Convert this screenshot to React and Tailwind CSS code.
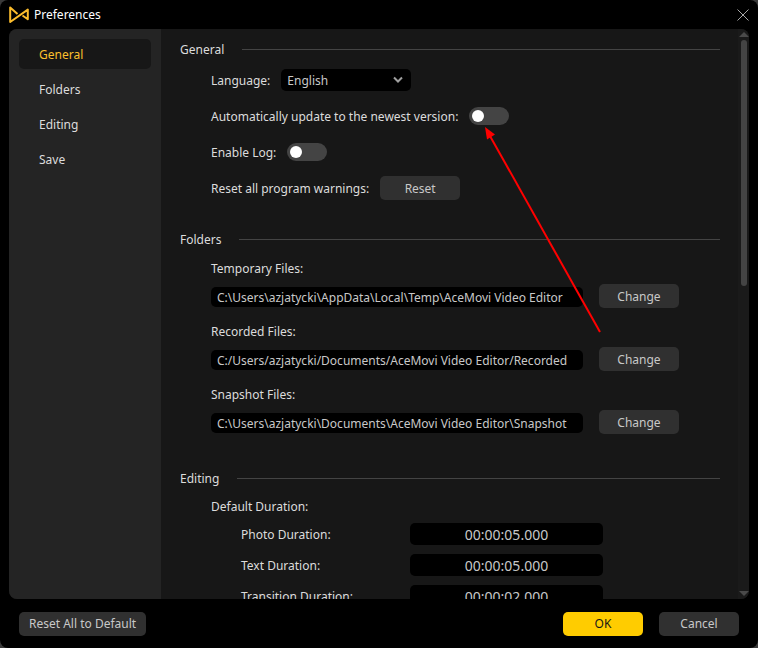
import React, { useState } from 'react';

const sections = ['General', 'Folders', 'Editing', 'Save'];

const folders = [
  { id: 'temporary', label: 'Temporary Files:', path: 'C:\\Users\\azjatycki\\AppData\\Local\\Temp\\AceMovi Video Editor' },
  { id: 'recorded', label: 'Recorded Files:', path: 'C:/Users/azjatycki/Documents/AceMovi Video Editor/Recorded' },
  { id: 'snapshot', label: 'Snapshot Files:', path: 'C:\\Users\\azjatycki\\Documents\\AceMovi Video Editor\\Snapshot' },
];

const durations = [
  { id: 'photo', label: 'Photo Duration:', value: '00:00:05.000' },
  { id: 'text', label: 'Text Duration:', value: '00:00:05.000' },
  { id: 'transition', label: 'Transition Duration:', value: '00:00:02.000' },
];

const Button = ({ children, className = 'w-20 bg-[#303030] text-[#c8c8c8]', ...props }) => (
  <button type="button" className={`h-6 shrink-0 rounded-[5px] ${className}`} {...props}>
    {children}
  </button>
);

const Switch = ({ id }) => {
  const [on, setOn] = useState(false);

  return (
    <input
      id={id}
      type="checkbox"
      role="switch"
      checked={on}
      onChange={() => setOn(!on)}
      className="h-[18px] w-10 shrink-0 appearance-none rounded-full bg-[#444444] px-[3px] py-[3px] before:block before:size-3 before:rounded-full before:bg-white checked:bg-[#ffcc00] checked:before:ml-auto"
    />
  );
};

const SectionTitle = ({ children }) => (
  <div className="mr-[18px] flex h-5 items-center gap-[18px]">
    <h2>{children}</h2>
    <div className="h-px flex-1 bg-[#444444]"></div>
  </div>
);

const App = () => {
  const [active, setActive] = useState('General');

  return (
    <div className="h-screen bg-[#3a3a3a] font-['Noto_Sans',sans-serif] text-[12px] leading-[21px] text-[#dcdcdc]">
      <div className="flex h-full flex-col overflow-hidden rounded-lg bg-black">
        {/* Title bar */}
        <header className="flex h-[29px] shrink-0 items-center justify-between px-[9px]">
          <div className="flex items-center gap-[5px]">
            <svg viewBox="0 0 20 18" className="h-[18px] w-5" fill="none" stroke="#fbbc2c" strokeWidth="2" strokeLinejoin="round">
              <path d="M8.5 8 L1.2 1.5 V16 L18.8 3.6 V13.2 L13.5 9.5" />
            </svg>
            <h1 className="leading-5 text-white">Preferences</h1>
          </div>
          <button type="button" aria-label="Close">
            <svg viewBox="0 0 12 12" className="size-3" stroke="#a8a8a8" strokeWidth="1">
              <path d="M0.5 0.5 L11.5 11.5 M11.5 0.5 L0.5 11.5" />
            </svg>
          </button>
        </header>

        <main className="mx-[9px] flex min-h-0 flex-1 overflow-hidden rounded-lg bg-[#171717]">
          {/* Sidebar */}
          <nav className="flex w-[152px] shrink-0 flex-col gap-[5px] bg-[#242424] p-[10px]">
            {sections.map((name) => (
              <button
                key={name}
                type="button"
                onClick={() => setActive(name)}
                className={`h-[30px] rounded-[5px] px-5 text-left ${name === active ? 'bg-[#171717] text-[#fbc02d]' : ''}`}
              >
                {name}
              </button>
            ))}
          </nav>

          {/* Settings */}
          <div className="min-w-0 flex-1 overflow-y-auto [scrollbar-width:none]">
            <div className="relative pt-[10px] pl-[19px]">
              <section>
                <SectionTitle>General</SectionTitle>
                <div className="mt-[9px] flex flex-col gap-3 pl-[31px]">
                  <div className="flex h-6 items-center gap-[11px]">
                    <label htmlFor="language">Language:</label>
                    <div className="relative">
                      <select id="language" className="block h-[22px] w-[130px] appearance-none rounded-[5px] bg-black px-[6px] text-[#c8c8c8]">
                        <option>English</option>
                      </select>
                      <svg viewBox="0 0 10 8" className="pointer-events-none absolute top-[7px] right-2 h-2 w-[10px]" fill="none" stroke="#a0a0a0" strokeWidth="2">
                        <path d="M1 1.5 L5 5.5 L9 1.5" />
                      </svg>
                    </div>
                  </div>
                  <div className="flex h-6 items-center gap-[11px]">
                    <label htmlFor="auto-update">Automatically update to the newest version:</label>
                    <Switch id="auto-update" />
                  </div>
                  <div className="flex h-6 items-center gap-[11px]">
                    <label htmlFor="enable-log">Enable Log:</label>
                    <Switch id="enable-log" />
                  </div>
                  <div className="flex h-6 items-center gap-[11px]">
                    <span>Reset all program warnings:</span>
                    <Button>Reset</Button>
                  </div>
                </div>
              </section>

              <section className="mt-[29px]">
                <SectionTitle>Folders</SectionTitle>
                <div className="mt-[9px] flex flex-col gap-[13px] pl-[31px]">
                  {folders.map(({ id, label, path }) => (
                    <div key={id} className="flex flex-col gap-[5px]">
                      <label htmlFor={id}>{label}</label>
                      <div className="flex items-end gap-4">
                        <input
                          id={id}
                          type="text"
                          defaultValue={path}
                          className="mb-px h-5 w-[372px] rounded-[5px] bg-black px-[6px] pt-px text-[#c8c8c8]"
                        />
                        <Button>Change</Button>
                      </div>
                    </div>
                  ))}
                </div>
              </section>

              <section className="mt-[34px]">
                <SectionTitle>Editing</SectionTitle>
                <div className="mt-2 pl-[31px]">
                  <h3>Default Duration:</h3>
                  <div className="mt-[6px] flex flex-col gap-[9px] pl-[30px]">
                    {durations.map(({ id, label, value }) => (
                      <div key={id} className="flex h-[22px] items-center">
                        <label htmlFor={id} className="w-[169px]">{label}</label>
                        <input
                          id={id}
                          type="text"
                          defaultValue={value}
                          className="h-[22px] w-[193px] rounded-[5px] bg-black text-center text-[14px] text-[#c8c8c8]"
                        />
                      </div>
                    ))}
                  </div>
                </div>
              </section>

              {/* Pointer to the auto-update switch */}
              <svg viewBox="0 0 116 206" className="pointer-events-none absolute top-[98px] left-[324px] h-[206px] w-[116px]">
                <path d="M5 9 L115 205" stroke="#ff0000" strokeWidth="2" />
                <path d="M0 0 L10 7.5 L2 12.5 Z" fill="#ff0000" />
              </svg>
            </div>
          </div>

          {/* Scrollbar */}
          <div className="flex w-[11px] shrink-0 flex-col items-center bg-[#1a1a1a] py-[3px]">
            <svg viewBox="0 0 10 5" className="h-[5px] w-[10px]" fill="#4a4a4a">
              <path d="M0 5 L5 0 L10 5 Z" />
            </svg>
            <div className="mt-[3px] h-[246px] w-[6px] rounded-full bg-[#444444]"></div>
            <svg viewBox="0 0 10 5" className="mt-auto h-[5px] w-[10px]" fill="#4a4a4a">
              <path d="M0 0 L5 5 L10 0 Z" />
            </svg>
          </div>
        </main>

        {/* Footer */}
        <footer className="flex h-[49px] shrink-0 items-center gap-4 px-[19px]">
          <Button className="mr-auto bg-[#303030] px-[10px] text-[#c8c8c8]">Reset All to Default</Button>
          <Button className="w-20 bg-[#ffcc00] text-[#171717]">OK</Button>
          <Button>Cancel</Button>
        </footer>
      </div>
    </div>
  );
};

export default App;
